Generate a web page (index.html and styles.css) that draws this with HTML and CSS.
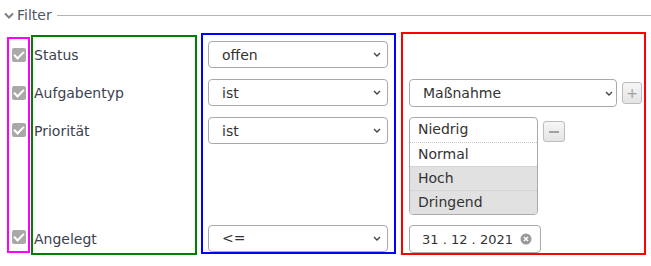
FILE: index.html
```html
<!DOCTYPE html>
<html lang="de">
<head>
  <meta charset="UTF-8">
  <meta name="viewport" content="width=device-width, initial-scale=1.0">
  <title>Filter</title>
  <link rel="stylesheet" href="styles.css">
</head>
<body>
  <div class="filter">
    <div class="legend">
      <svg class="toggle" width="10" height="7" viewBox="0 0 10 7">
        <path d="M1 1.5 L5 5.5 L9 1.5" fill="none" stroke="#7a7f88" stroke-width="2"/>
      </svg>
      <span class="legend-text">Filter</span>
      <div class="rule"></div>
    </div>

    <div class="grid">
      <!-- Checkboxen -->
      <div class="col col-check">
        <div class="cell"><span class="check"></span></div>
        <div class="cell"><span class="check"></span></div>
        <div class="cell tall"><div class="line"><span class="check"></span></div></div>
        <div class="cell"><span class="check"></span></div>
      </div>

      <!-- Bezeichnungen -->
      <div class="col col-label">
        <div class="cell">Status</div>
        <div class="cell">Aufgabentyp</div>
        <div class="cell tall"><div class="line">Priorität</div></div>
        <div class="cell">Angelegt</div>
      </div>

      <!-- Operatoren -->
      <div class="col col-op">
        <div class="cell"><div class="select op"><span>offen</span><svg class="caret" width="8" height="5" viewBox="0 0 8 5"><path d="M1 1 L4 4 L7 1" fill="none" stroke="#444" stroke-width="1.4"/></svg></div></div>
        <div class="cell"><div class="select op"><span>ist</span><svg class="caret" width="8" height="5" viewBox="0 0 8 5"><path d="M1 1 L4 4 L7 1" fill="none" stroke="#444" stroke-width="1.4"/></svg></div></div>
        <div class="cell tall"><div class="line"><div class="select op"><span>ist</span><svg class="caret" width="8" height="5" viewBox="0 0 8 5"><path d="M1 1 L4 4 L7 1" fill="none" stroke="#444" stroke-width="1.4"/></svg></div></div></div>
        <div class="cell"><div class="select op"><span>&lt;=</span><svg class="caret" width="8" height="5" viewBox="0 0 8 5"><path d="M1 1 L4 4 L7 1" fill="none" stroke="#444" stroke-width="1.4"/></svg></div></div>
      </div>

      <!-- Werte -->
      <div class="col col-value">
        <div class="cell"></div>
        <div class="cell">
          <div class="select value"><span>Maßnahme</span><svg class="caret" width="8" height="5" viewBox="0 0 8 5"><path d="M1 1 L4 4 L7 1" fill="none" stroke="#444" stroke-width="1.4"/></svg></div>
          <button class="small-btn plus">+</button>
        </div>
        <div class="cell tall">
          <ul class="listbox">
            <li>Niedrig</li>
            <li>Normal</li>
            <li class="selected">Hoch</li>
            <li class="selected">Dringend</li>
          </ul>
          <button class="small-btn minus"><span class="bar"></span></button>
        </div>
        <div class="cell">
          <div class="date">
            <span>31 . 12 . 2021</span>
            <svg class="clear" width="12" height="12" viewBox="0 0 12 12">
              <circle cx="6" cy="6" r="5.5" fill="#9a9a9a"/>
              <path d="M4 4 L8 8 M8 4 L4 8" stroke="#fff" stroke-width="1.5"/>
            </svg>
          </div>
        </div>
      </div>
    </div>
  </div>
</body>
</html>
```

FILE: styles.css
```css
body {
  margin: 0;
  font-family: "DejaVu Sans", Verdana, sans-serif;
  font-size: 14px;
  color: #3c4150;
  background: #ffffff;
}

/* Legende */
.legend {
  height: 30px;
  display: flex;
  align-items: center;
}

.toggle {
  margin-left: 4px;
  margin-right: 3px;
}

.legend-text {
  color: #4f5562;
}

.rule {
  flex: 1;
  height: 1px;
  background: #b4b4b4;
  margin-left: 5px;
}

/* Spalten */
.grid {
  display: flex;
  align-items: flex-start;
  margin-top: 2px;
}

.col {
  display: flex;
  flex-direction: column;
  gap: 10px;
  box-sizing: border-box;
  border: 2px solid;
}

.col-check {
  border-color: #ff00ff;
  margin: 5px 0 0 7px;
  width: 23px;
  height: 216px;
  padding: 2px 0 0 3px;
}

.col-label {
  border-color: #008000;
  margin: 3px 0 0 1px;
  width: 166px;
  height: 220px;
  padding: 4px 0 0 1px;
}

.col-op {
  border-color: #0000ff;
  margin: 1px 0 0 4px;
  width: 195px;
  height: 221px;
  padding: 6px 0 0 5px;
}

.col-value {
  border-color: #ff0000;
  margin: 0 0 0 5px;
  width: 245px;
  height: 223px;
  padding: 7px 0 0 6px;
}

.cell {
  height: 28px;
  display: flex;
  align-items: center;
}

.cell.tall {
  height: 98px;
  align-items: flex-start;
}

.line {
  height: 28px;
  display: flex;
  align-items: center;
}

/* Checkbox */
.check {
  width: 14px;
  height: 14px;
  border-radius: 2px;
  background: #a9a9a9;
  position: relative;
}

.check::after {
  content: "";
  position: absolute;
  left: 4px;
  top: 1px;
  width: 4px;
  height: 8px;
  border: solid #ffffff;
  border-width: 0 2px 2px 0;
  transform: rotate(45deg);
}

/* Auswahlfelder */
.select {
  box-sizing: border-box;
  height: 27px;
  border: 1px solid #aaaaaa;
  border-radius: 4px;
  background: #ffffff;
  display: flex;
  align-items: center;
  padding-left: 13px;
  color: #333333;
}

.select span {
  flex: 1;
}

.select.op {
  width: 180px;
  padding-right: 6px;
}

.select.value {
  width: 208px;
  height: 28px;
  padding-right: 3px;
}

.small-btn {
  box-sizing: border-box;
  border: 1px solid #bcbcbc;
  border-radius: 3px;
  background: linear-gradient(#f6f6f6, #e4e4e4);
  color: #a0a0a0;
  font-family: "DejaVu Sans", sans-serif;
  font-size: 14px;
  padding: 0;
  display: flex;
  align-items: center;
  justify-content: center;
}

.plus {
  width: 20px;
  height: 22px;
  margin-left: 5px;
}

.minus {
  width: 22px;
  height: 21px;
  margin: 4px 0 0 5px;
}

.minus .bar {
  width: 10px;
  height: 2px;
  background: #a0a0a0;
}

/* Liste */
.listbox {
  list-style: none;
  margin: 0;
  padding: 0;
  width: 129px;
  box-sizing: border-box;
  border: 1px solid #aaaaaa;
  border-radius: 4px;
  overflow: hidden;
  color: #333333;
}

.listbox li {
  height: 24px;
  line-height: 22px;
  padding-left: 8px;
  box-sizing: border-box;
  border-top: 1px dotted #c8c8c8;
}

.listbox li:first-child {
  border-top: none;
  line-height: 23px;
}

.listbox li.selected {
  background: #e1e1e1;
}

/* Datum */
.date {
  box-sizing: border-box;
  width: 132px;
  height: 28px;
  border: 1px solid #aaaaaa;
  border-radius: 4px;
  display: flex;
  align-items: center;
  padding-left: 12px;
  font-size: 13px;
  color: #333333;
}

.clear {
  margin-left: 7px;
}
```
